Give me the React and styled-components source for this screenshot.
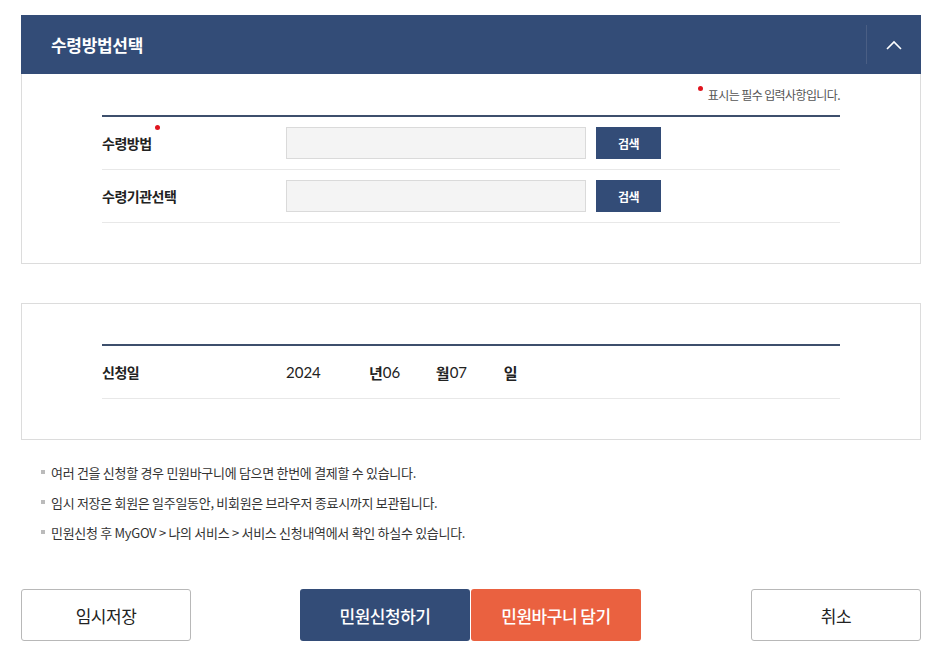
import React from 'react';
import styled, { createGlobalStyle } from 'styled-components';

const GlobalStyle = createGlobalStyle`
  html, body { margin: 0; padding: 0; background: #fff; }
  body {
    font-family: "Noto Sans CJK KR", "Noto Sans", sans-serif;
    color: #222;
  }
  * { box-sizing: border-box; }
`;

const Page = styled.div`
  width: 939px;
  padding: 15px 18px 20px 21px;
`;

const Header = styled.div`
  height: 59px;
  background: #334c77;
  display: flex;
  align-items: center;
  justify-content: space-between;
`;

const Title = styled.h2`
  margin: 0 0 0 30px;
  font-size: 17px;
  font-weight: 700;
  color: #fff;
  letter-spacing: -0.3px;
`;

const ToggleBtn = styled.button`
  width: 55px;
  height: 39px;
  border: none;
  border-left: 1px solid #4a5e84;
  background: transparent;
  display: flex;
  align-items: center;
  justify-content: center;
  padding: 0;
  cursor: pointer;
`;

const Panel = styled.section`
  border: 1px solid #dcdcdc;
  border-top: ${({ joined }) => (joined ? 'none' : '1px solid #dcdcdc')};
  padding: ${({ joined }) => (joined ? '10px 80px 40px' : '40px 80px 40px')};
  margin-bottom: ${({ gap }) => gap || 0}px;
`;

const Required = styled.div`
  display: flex;
  justify-content: flex-end;
  align-items: flex-start;
  font-size: 12px;
  color: #555;
  letter-spacing: -0.6px;
  height: 31px;
  padding-top: 2px;
`;

const Dot = styled.span`
  width: 5px;
  height: 5px;
  border-radius: 50%;
  background: #e0141e;
  display: inline-block;
  margin-right: 5px;
`;

const Table = styled.div`
  border-top: 2px solid #3d4f6c;
`;

const Row = styled.div`
  display: flex;
  align-items: center;
  height: 53px;
  border-bottom: 1px solid #e8e8e8;
`;

const Label = styled.div`
  width: 184px;
  font-size: 14px;
  font-weight: 700;
  color: #222;
  letter-spacing: -0.5px;
  display: flex;
  align-items: flex-start;
`;

const LabelDot = styled(Dot)`
  margin: -8px 0 0 3px;
`;

const Field = styled.input`
  width: 300px;
  height: 32px;
  background: #f4f4f4;
  border: 1px solid #dadada;
  margin-right: 10px;
  outline: none;
`;

const SearchBtn = styled.button`
  width: 65px;
  height: 32px;
  background: #334c77;
  color: #fff;
  border: none;
  font-family: inherit;
  font-size: 12px;
  font-weight: 700;
  letter-spacing: -0.5px;
  padding: 0;
`;

const DateVal = styled.span`
  width: ${({ w }) => w}px;
  font-family: Lato, "Noto Sans CJK KR", sans-serif;
  font-size: 15px;
  color: #222;
`;

const DateUnit = styled.span`
  font-size: 15px;
  font-weight: 700;
  color: #222;
`;

const Notes = styled.ul`
  list-style: none;
  margin: 17px 0 0;
  padding: 0 0 0 20px;
`;

const Note = styled.li`
  display: flex;
  align-items: center;
  height: 30px;
  font-size: 13px;
  color: #333;
  letter-spacing: -0.3px;
  &::before {
    content: '';
    width: 4px;
    height: 4px;
    background: #bbb;
    margin-right: 6px;
  }
`;

const Actions = styled.div`
  display: flex;
  align-items: center;
  margin-top: 42px;
`;

const Center = styled.div`
  display: flex;
  gap: 1px;
  margin: 0 110px 0 109px;
`;

const ActionBtn = styled.button`
  width: 170px;
  height: 52px;
  border-radius: 3px;
  font-family: inherit;
  font-size: 17px;
  letter-spacing: -0.5px;
  padding: 0;
  border: 1px solid ${({ variant }) => (variant === 'line' ? '#b8b8b8' : 'transparent')};
  background: ${({ variant }) =>
    variant === 'primary' ? '#334c77' : variant === 'accent' ? '#ea6140' : '#fff'};
  color: ${({ variant }) => (variant === 'line' ? '#222' : '#fff')};
  font-weight: ${({ variant }) => (variant === 'line' ? 400 : 500)};
`;

const App = () => (
  <Page>
    <GlobalStyle />
    <Header>
      <Title>수령방법선택</Title>
      <ToggleBtn aria-label="접기">
        <svg width="16" height="10" viewBox="0 0 16 10">
          <polyline points="1,9 8,2 15,9" fill="none" stroke="#fff" strokeWidth="1.6" />
        </svg>
      </ToggleBtn>
    </Header>
    <Panel joined gap={39}>
      <Required>
        <Dot />
        <span>표시는 필수 입력사항입니다.</span>
      </Required>
      <Table>
        <Row>
          <Label>
            수령방법
            <LabelDot />
          </Label>
          <Field readOnly />
          <SearchBtn>검색</SearchBtn>
        </Row>
        <Row>
          <Label>수령기관선택</Label>
          <Field readOnly />
          <SearchBtn>검색</SearchBtn>
        </Row>
      </Table>
    </Panel>
    <Panel>
      <Table>
        <Row>
          <Label>신청일</Label>
          <DateVal w={83}>2024</DateVal>
          <DateUnit>년</DateUnit>
          <DateVal w={53}>06</DateVal>
          <DateUnit>월</DateUnit>
          <DateVal w={54}>07</DateVal>
          <DateUnit>일</DateUnit>
        </Row>
      </Table>
    </Panel>
    <Notes>
      <Note>여러 건을 신청할 경우 민원바구니에 담으면 한번에 결제할 수 있습니다.</Note>
      <Note>임시 저장은 회원은 일주일동안, 비회원은 브라우저 종료시까지 보관됩니다.</Note>
      <Note>민원신청 후 MyGOV &gt; 나의 서비스 &gt; 서비스 신청내역에서 확인 하실수 있습니다.</Note>
    </Notes>
    <Actions>
      <ActionBtn variant="line">임시저장</ActionBtn>
      <Center>
        <ActionBtn variant="primary">민원신청하기</ActionBtn>
        <ActionBtn variant="accent">민원바구니 담기</ActionBtn>
      </Center>
      <ActionBtn variant="line">취소</ActionBtn>
    </Actions>
  </Page>
);

export default App;
